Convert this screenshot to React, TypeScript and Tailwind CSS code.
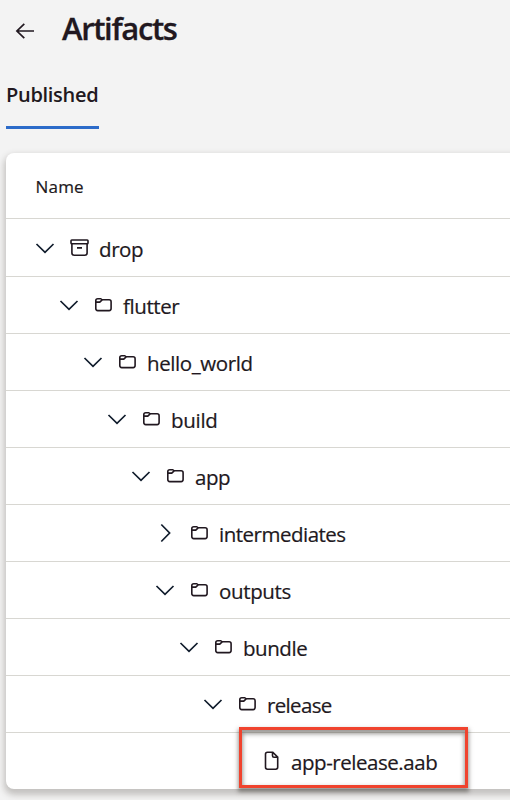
import React from "react";

type Kind = "archive" | "folder" | "file";

interface Item {
  name: string;
  kind: Kind;
  pad: string;
  tracking: string;
  open?: boolean;
}

const items: Item[] = [
  { name: "drop", kind: "archive", pad: "pl-[29px]", tracking: "tracking-[-0.4px]", open: true },
  { name: "flutter", kind: "folder", pad: "pl-[53px]", tracking: "tracking-[-0.4px]", open: true },
  { name: "hello_world", kind: "folder", pad: "pl-[77px]", tracking: "tracking-[-0.4px]", open: true },
  { name: "build", kind: "folder", pad: "pl-[101px]", tracking: "tracking-[-0.3px]", open: true },
  { name: "app", kind: "folder", pad: "pl-[125px]", tracking: "tracking-[-0.5px]", open: true },
  { name: "intermediates", kind: "folder", pad: "pl-[149px]", tracking: "tracking-[-0.5px]", open: false },
  { name: "outputs", kind: "folder", pad: "pl-[149px]", tracking: "tracking-[-0.35px]", open: true },
  { name: "bundle", kind: "folder", pad: "pl-[173px]", tracking: "tracking-[-0.45px]", open: true },
  { name: "release", kind: "folder", pad: "pl-[197px]", tracking: "tracking-[-0.65px]", open: true },
];

function Chevron({ open }: { open: boolean }) {
  return (
    <svg width="20" height="20" viewBox="0 0 20 20" fill="none" stroke="#101c2c" strokeWidth="1.7" className="shrink-0">
      <path d={open ? "M1.5 6 L10 14.3 L18.5 6" : "M6.3 1.5 L14.6 10 L6.3 18.5"} />
    </svg>
  );
}

function KindIcon({ kind }: { kind: Kind }) {
  return (
    <svg width="20" height="20" viewBox="0 0 20 20" fill="none" stroke="#211820" strokeWidth="1.6" className="shrink-0">
      {kind === "archive" && (
        <>
          <rect x="1" y="2" width="17" height="3.8" rx="0.8" />
          <path d="M1.9 5.8V15Q1.9 17.2 4.1 17.2H14.9Q17.1 17.2 17.1 15V5.8M7 9.9H12" />
        </>
      )}
      {kind === "folder" && (
        <path d="M1.8 5.5Q1.8 3.7 3.8 3.7H6.7L8.2 4.8H15.1Q17.1 4.8 17.1 6.8V13.6Q17.1 15.6 15.1 15.6H3.8Q1.8 15.6 1.8 13.6ZM1.8 7.1H5.7L8.2 4.8" />
      )}
      {kind === "file" && (
        <path d="M5.5 2.2H10.8L15.7 7.1V17.3Q15.7 19.2 13.7 19.2H5.5Q3.5 19.2 3.5 17.3V4.2Q3.5 2.2 5.5 2.2M10.5 2.2V5.8Q10.5 7.3 12 7.3H15.7" />
      )}
    </svg>
  );
}

export default function App() {
  return (
    <div className="h-[800px] w-[510px] overflow-hidden bg-[#f3f3f3] font-['Open_Sans','Noto_Sans',sans-serif] text-[#211820]">
      <header className="flex h-[60px] items-start pl-[15px]">
        <svg width="20" height="20" viewBox="0 0 20 20" fill="none" stroke="#211820" strokeWidth="1.7" className="mt-[21px] shrink-0">
          <path d="M19 10H2M9.3 2.8L1.9 10L9.3 17.2" />
        </svg>
        <h1 className="ml-[27px] mt-[8px] whitespace-nowrap text-[31px] font-semibold leading-[40px] tracking-[-1.35px] [-webkit-text-stroke:0.3px]">Artifacts</h1>
      </header>
      <nav className="flex h-[93px] pl-[6px]">
        <div className="mt-[20px] h-[49px] w-[93px] whitespace-nowrap border-b-[3px] border-[#2c6bc9] text-[20px] font-semibold leading-[29px] tracking-[-0.3px]">
          Published
        </div>
      </nav>
      <main className="ml-[6px] h-[636px] w-[520px] rounded-[8px] bg-white shadow-[0_4px_6px_2px_rgba(60,55,45,0.26)]">
        <div className="flex h-[66px] items-center border-b border-[#d8d7d2] pl-[29.5px] text-[17px] tracking-[0.2px]">
          <span className="mt-[2px] [-webkit-text-stroke:0.2px]">Name</span>
        </div>
        <div className="pt-px">
          {items.map((item) => (
            <div key={item.name} className={`flex h-[57px] items-center border-b border-[#d8d7d2] ${item.pad}`}>
              <Chevron open={!!item.open} />
              <span className="ml-[15px] flex">
                <KindIcon kind={item.kind} />
              </span>
              <span className={`ml-[9px] mt-[2px] whitespace-nowrap text-[20.5px] leading-[28px] [-webkit-text-stroke:0.2px] ${item.tracking}`}>{item.name}</span>
            </div>
          ))}
        </div>
        <div className="relative -mt-[6px] ml-[233px] flex h-[61px] w-[229px] items-center border-[3px] border-[#f0432e] pl-[20px] pt-[4px] shadow-[0_3px_4px_1px_rgba(60,55,50,0.5),inset_0_3px_4px_1px_rgba(60,55,50,0.5)]">
          <KindIcon kind="file" />
          <span className="ml-[9px] mt-[4px] whitespace-nowrap text-[20.5px] leading-[28px] tracking-[-0.45px] [-webkit-text-stroke:0.2px]">app-release.aab</span>
        </div>
      </main>
    </div>
  );
}
